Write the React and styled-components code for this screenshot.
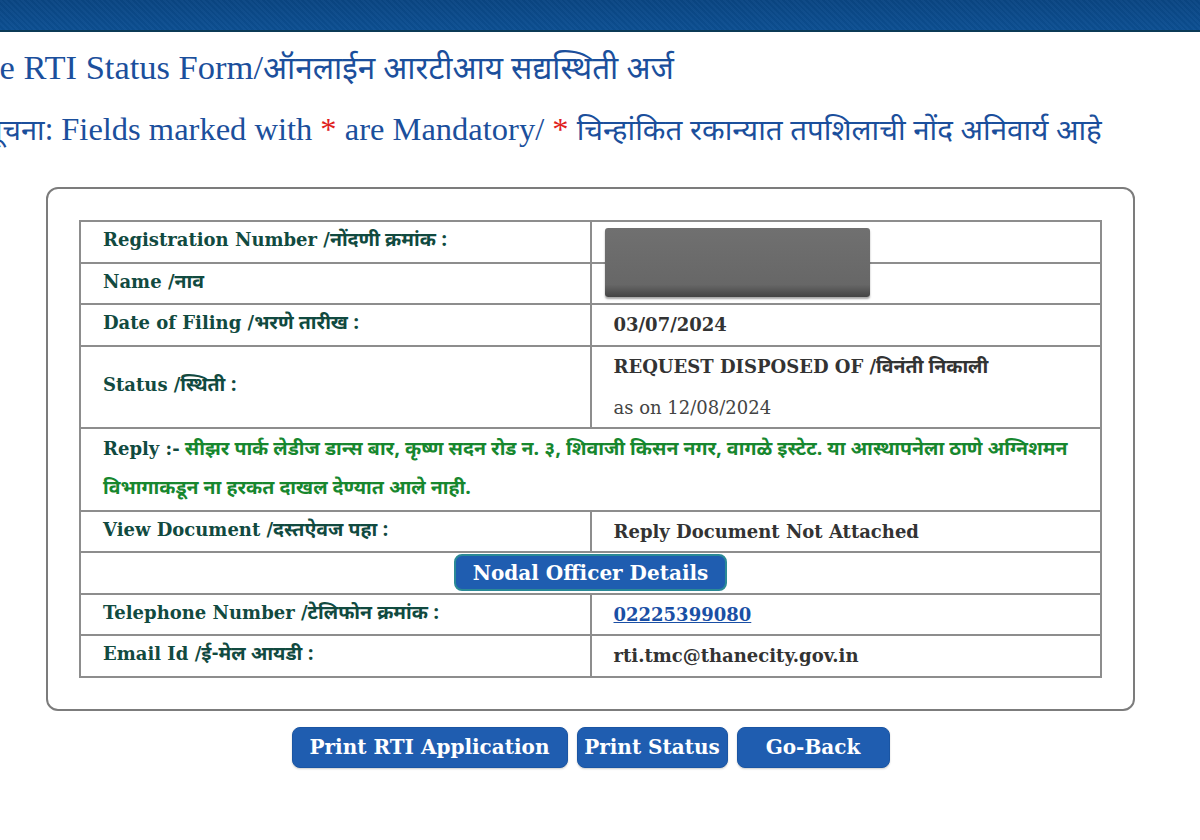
import React from 'react';
import styled, { createGlobalStyle } from 'styled-components';

const GlobalStyle = createGlobalStyle`
    html, body {
        margin: 0;
        padding: 0;
        background: #ffffff;
        overflow: hidden;
    }
    body {
        font-family: "DejaVu Serif", "Noto Sans Devanagari", "Noto Sans", serif;
    }
`;

const devanagari = `"Noto Sans Devanagari", "Noto Sans", sans-serif`;

const rows = [
    { label: 'Registration Number /', mr: 'नोंदणी क्रमांक :', redacted: true },
    { label: 'Name /', mr: 'नाव' },
    { label: 'Date of Filing /', mr: 'भरणे तारीख :', value: '03/07/2024' },
];

function App() {
    return (
        <Page>
            <GlobalStyle />
            <TopBand />
            <Heading>Online RTI Status Form/<Mr $size="31.5px">ऑनलाईन आरटीआय सद्यस्थिती अर्ज</Mr></Heading>
            <Hint>
                <Mr $size="29px">सूचना:</Mr> Fields marked with <Star>*</Star> are Mandatory/ <Star>*</Star> <Mr $size="29.5px">चिन्हांकित रकान्यात तपशिलाची नोंद अनिवार्य आहे</Mr>
            </Hint>

            <Card>
                <StatusTable>
                    <tbody>
                        {rows.map(r => (
                            <tr key={r.label}>
                                <Label>{r.label}<Mr>{r.mr}</Mr></Label>
                                <Value>
                                    {r.redacted && <Redaction />}
                                    {r.value}
                                </Value>
                            </tr>
                        ))}
                        <tr>
                            <Label>Status /<Mr>स्थिती :</Mr></Label>
                            <Value>
                                <Line>REQUEST DISPOSED OF /<Mr>विनंती निकाली</Mr></Line>
                                <Line $light>as on 12/08/2024</Line>
                            </Value>
                        </tr>
                        <tr>
                            <ReplyCell colSpan={2}>
                                <ReplyTag>Reply :-</ReplyTag> सीझर पार्क लेडीज डान्स बार, कृष्ण सदन रोड न. ३, शिवाजी किसन नगर, वागळे इस्टेट. या आस्थापनेला ठाणे अग्निशमन विभागाकडून ना हरकत दाखल देण्यात आले नाही.
                            </ReplyCell>
                        </tr>
                        <tr>
                            <Label>View Document /<Mr>दस्तऐवज पहा :</Mr></Label>
                            <Value>Reply Document Not Attached</Value>
                        </tr>
                        <tr>
                            <CenterCell colSpan={2}>
                                <NodalButton type="button">Nodal Officer Details</NodalButton>
                            </CenterCell>
                        </tr>
                        <tr>
                            <Label>Telephone Number /<Mr>टेलिफोन क्रमांक :</Mr></Label>
                            <Value><Phone href="#">02225399080</Phone></Value>
                        </tr>
                        <tr>
                            <Label>Email Id /<Mr>ई-मेल आयडी :</Mr></Label>
                            <Value>rti.tmc@thanecity.gov.in</Value>
                        </tr>
                    </tbody>
                </StatusTable>
            </Card>

            <Actions>
                <ActionButton type="button" $w="276px">Print RTI Application</ActionButton>
                <ActionButton type="button" $w="151px">Print Status</ActionButton>
                <ActionButton type="button" $w="153px">Go-Back</ActionButton>
            </Actions>
        </Page>
    );
}

export default App;

const Page = styled.div`
    width: 1200px;
    height: 840px;
    overflow: hidden;
`;

const TopBand = styled.div`
    height: 30px;
    border-bottom: 2px solid #0b3a56;
    background:
        repeating-linear-gradient(45deg, rgba(255,255,255,0.025) 0 2px, rgba(0,0,0,0.03) 2px 4px),
        linear-gradient(#0a4683, #0c4f92);
`;

const Heading = styled.h1`
    margin: 15px 0 0 -79px;
    font-family: "Liberation Serif", ${devanagari};
    font-weight: normal;
    font-size: 34.5px;
    line-height: 40px;
    color: #1b4f9c;
    white-space: nowrap;
`;

const Hint = styled.p`
    margin: 17px 0 0 -17px;
    font-family: "Liberation Serif", ${devanagari};
    font-size: 32.5px;
    line-height: 40px;
    color: #1b4f9c;
    white-space: nowrap;
`;

const Star = styled.span`
    color: #e0201c;
`;

const Card = styled.div`
    margin: 34px 0 0 46px;
    width: 1089px;
    box-sizing: border-box;
    padding: 31px;
    border: 2px solid #7c7c7c;
    border-radius: 12px;
`;

const StatusTable = styled.table`
    width: 100%;
    border-collapse: collapse;
    table-layout: fixed;
    td {
        border: 2px solid #8d8d8d;
        height: 39.5px;
        padding: 0 22px;
        vertical-align: middle;
        font-size: 18px;
        font-weight: bold;
    }
`;

const Mr = styled.span`
    font-family: ${devanagari};
    font-size: ${p => p.$size || '19.5px'};
`;

const Label = styled.td`
    color: #114a40;
`;

const Value = styled.td`
    position: relative;
    color: #333333;
`;

const Line = styled.div`
    line-height: 39px;
    font-weight: ${p => (p.$light ? 'normal' : 'bold')};
    color: ${p => (p.$light ? '#444444' : '#333333')};
`;

const Redaction = styled.div`
    position: absolute;
    top: 6px;
    left: 13px;
    width: 265px;
    height: 69px;
    border-radius: 3px;
    background: linear-gradient(180deg, #707070 0%, #676767 82%, #444444 100%);
    box-shadow: 0 2px 2px rgba(0, 0, 0, 0.35);
    z-index: 1;
`;

const ReplyCell = styled.td`
    && {
        padding: 0 22px;
        line-height: 39.5px;
        font-family: ${devanagari};
        font-size: 19.5px;
        color: #17872e;
    }
`;

const ReplyTag = styled.span`
    font-family: "DejaVu Serif", serif;
    font-size: 18px;
    color: #114a40;
`;

const CenterCell = styled.td`
    && {
        text-align: center;
    }
`;

const BlueButton = styled.button`
    font-family: "DejaVu Serif", serif;
    font-weight: bold;
    color: #ffffff;
    background: #1f5db0;
    cursor: pointer;
`;

const NodalButton = styled(BlueButton)`
    height: 37px;
    padding: 0 17px;
    font-size: 20px;
    border: 2px solid #2b8a96;
    border-radius: 8px;
    vertical-align: middle;
`;

const Phone = styled.a`
    color: #1a4fa5;
    text-decoration: underline;
`;

const Actions = styled.div`
    display: flex;
    justify-content: center;
    gap: 9px;
    margin: 16px 0 0 46px;
    width: 1089px;
`;

const ActionButton = styled(BlueButton)`
    width: ${p => p.$w};
    height: 41px;
    padding: 0;
    font-size: 20px;
    border: 1px solid #1a55a3;
    border-radius: 8px;
    box-shadow: 0 1px 2px rgba(0, 0, 0, 0.2);
`;
